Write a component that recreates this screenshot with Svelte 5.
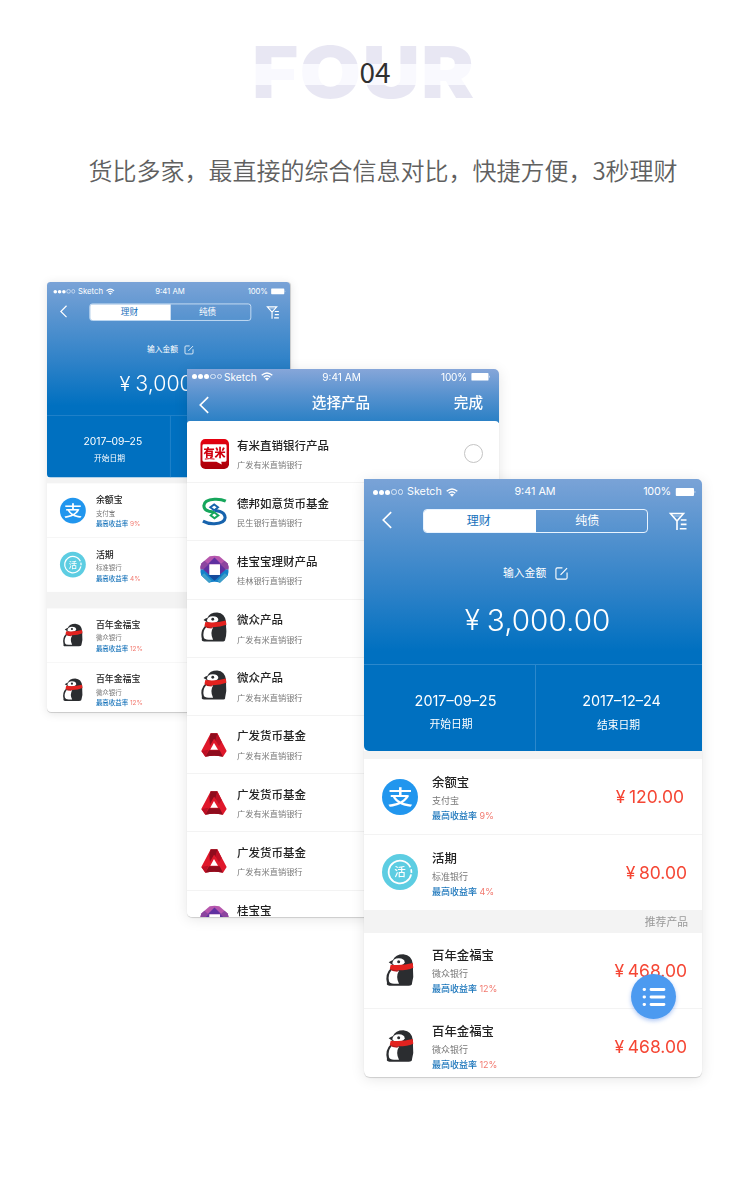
<script>
  const market = [
    { icon: 'youmi', name: '有米直销银行产品', bank: '广发有米直销银行', radio: true },
    { icon: 'debang', name: '德邦如意货币基金', bank: '民生银行直销银行' },
    { icon: 'guilin', name: '桂宝宝理财产品', bank: '桂林银行直销银行' },
    { icon: 'penguin', name: '微众产品', bank: '广发有米直销银行' },
    { icon: 'penguin', name: '微众产品', bank: '广发有米直销银行' },
    { icon: 'guangfa', name: '广发货币基金', bank: '广发有米直销银行' },
    { icon: 'guangfa', name: '广发货币基金', bank: '广发有米直销银行' },
    { icon: 'guangfa', name: '广发货币基金', bank: '广发有米直销银行' },
    { icon: 'guilin', name: '桂宝宝', bank: '' }
  ];
  const held = [
    { icon: 'zhi', name: '余额宝', bank: '支付宝', rate: '9%', money: '120.00', inset: true },
    { icon: 'huo', name: '活期', bank: '标准银行', rate: '4%', money: '80.00' }
  ];
  const advised = [
    { icon: 'penguin', name: '百年金福宝', bank: '微众银行', rate: '12%', money: '468.00' },
    { icon: 'penguin', name: '百年金福宝', bank: '微众银行', rate: '12%', money: '468.00' }
  ];
</script>

{#snippet logo(kind)}
  {#if kind === 'penguin'}
    <svg class="logo-penguin" viewBox="0 0 84 96">
      <path fill="#2b2d30" d="M8 25 Q15 20 21 18 Q28 1 52 1 Q78 3 81 32 V48 Q84 70 78 88 Q79 95 68 95 H10 Q0 94 3 87 Q-4 60 15 42 L20 33 Z" />
      <path fill="#fff" d="M19 28 Q21 13 38 13 Q56 14 56 25 Q53 35 34 35 Q22 35 19 28 Z" />
      <circle cx="38" cy="23" r="4.500" fill="#2b2d30" />
      <path fill="#fff" d="M17 48 Q4 64 9 82 Q11 89 24 89 L39 89 Q28 68 39 50 Z" />
      <path fill="#e3221f" d="M14 32 Q48 36 80 27 L82 41 Q64 49 38 49 L14 47 Q10 45 12 41 Z" />
      <path fill="#b91518" d="M14 47 L38 49 L34 53 L20 51 Z" />
    </svg>
  {:else if kind === 'zhi'}
    <svg class="logo-round" viewBox="0 0 36 36">
      <circle cx="18" cy="18" r="18" fill="#2196ee" />
      <text transform="translate(18.300 25.800) scale(1.120 .92)" font-size="22.500" font-weight="500" text-anchor="middle" fill="#fff">支</text>
    </svg>
  {:else if kind === 'huo'}
    <svg class="logo-round" viewBox="0 0 36 36">
      <circle cx="18" cy="18" r="18" fill="#5dcde2" />
      <circle cx="18" cy="18" r="11.400" fill="none" stroke="#fff" stroke-width="1.700" stroke-dasharray="64 2 3.600 2" transform="rotate(12 18 18)" />
      <text x="18" y="22.200" font-size="11.500" font-weight="500" text-anchor="middle" fill="#fff">活</text>
    </svg>
  {:else if kind === 'youmi'}
    <svg class="logo-wide" viewBox="0 0 30 30">
      <defs>
        <linearGradient id="ym" x1="0" y1="0" x2="0" y2="1">
          <stop offset="0" stop-color="#e6000f" />
          <stop offset="1" stop-color="#a9000a" />
        </linearGradient>
      </defs>
      <rect x=".5" y="0" width="29.500" height="31" rx="5" fill="url(#ym)" />
      <path fill="#fff" d="M4 5.500 H26 Q27.500 5.500 27.500 7 V22 Q27.500 23.500 26 23.500 H22 L22.500 26.500 L17 23.500 H4 Q2.500 23.500 2.500 22 V7 Q2.500 5.500 4 5.500 Z" />
      <text x="15" y="18.400" font-size="11.500" font-weight="900" text-anchor="middle" fill="#d1000e">有米</text>
      <path d="M5 20.800 Q10 19.800 15 20.800" stroke="#d1000e" stroke-width="1" fill="none" />
    </svg>
  {:else if kind === 'debang'}
    <svg class="logo-wide" viewBox="0 0 90 90" fill="none" stroke-width="9.500">
      <path stroke="#1763ad" d="M9 75 Q25 84 45 83 Q77 81 78 64 Q77 50 62 45 L45 41" />
      <path stroke="#16a65c" d="M80 13 Q66 6 45 7 Q13 8 12 27 Q12 40 28 44 L45 47" />
      <path stroke="#1763ad" stroke-width="6" d="M45 42 L32 32 L44 23 L56 32 L45 41" />
      <path stroke="#16a65c" stroke-width="6" d="M44 47 L57 57 L45 66 L33 57 L44 47" />
    </svg>
  {:else if kind === 'guilin'}
    <svg class="logo-wide" viewBox="0 0 90 90">
      <path fill="#b657ad" d="M30 4 Q45 1 60 4 L86 26 Q90 36 88 45 H2 Q0 36 4 26 Z" />
      <path fill="#8c459f" d="M4 26 L14 18 L28 30 V45 H2 Q0 36 4 26 Z M86 26 L76 18 L62 30 V45 H88 Q90 36 86 26 Z" />
      <path fill="#1381ca" d="M2 45 H88 Q90 54 86 64 L62 86 Q45 80 28 86 L4 64 Q0 54 2 45 Z" />
      <path fill="#3f9fc8" d="M4 64 L13 57 L36 80 L28 86 Z M86 64 L77 57 L54 80 L62 86 Z" />
      <path fill="#6030a0" d="M45 8 L66 29 H24 Z M10 45 L29 27 V62 Z M80 45 L61 27 V62 Z" />
      <path fill="#144b9d" d="M24 61 H66 L45 80 Z" />
      <rect x="29" y="29" width="33" height="33" fill="#fff" />
    </svg>
  {:else}
    <svg class="logo-wide tri" viewBox="0 0 78 72">
      <path fill="#e0182b" d="M29 1 H49 L77 54 L66 71 Q39 66 13 71 L1 54 Z" />
      <path fill="#8f0c1d" d="M29 1 H49 L45 24 L39 17 L27 38 L25 18 Z" />
      <path fill="#bd1025" d="M1 54 L22 50 L13 71 Z M49 1 L62 27 L54 40 L43 22 Z" />
      <path fill="#8f0c1d" d="M13 71 L24 52 H56 L66 71 Q39 66 13 71 Z" />
      <path fill="#fff" d="M39 30 L51 50 H28 Z" />
    </svg>
  {/if}
{/snippet}

{#snippet status()}
  <div class="status">
    <span class="carrier">
      <i></i><i></i><i></i><i class="off"></i><i class="off"></i>
      <b>Sketch</b>
      <svg class="wifi" viewBox="0 0 12 9" fill="none" stroke="#fff" stroke-width="1.400">
        <path d="M.7 3.300 Q6 -1.500 11.300 3.300 M2.700 5.300 Q6 2.300 9.300 5.300" />
        <path fill="#fff" stroke="none" d="M6 8.800 L3.900 6.600 Q6 5 8.100 6.600 Z" />
      </svg>
    </span>
    <span class="clock">9:41 AM</span>
    <span class="power">100%
      <svg viewBox="0 0 23 9"><rect width="20.500" height="9" rx="1" fill="#fff" /><path d="M21.300 2.800 Q23 4.500 21.300 6.200 Z" fill="#fff" /></svg>
    </span>
  </div>
{/snippet}

{#snippet back()}
  <svg class="back" viewBox="0 0 12 20" fill="none" stroke="#fff" stroke-width="2"><path d="M11 .5 L1.500 10 L11 19.500" /></svg>
{/snippet}

{#snippet row(item, full)}
  <li class="row">
    <div class="mark">{@render logo(item.icon)}</div>
    <div class="info">
      <h3>{item.name}</h3>
      <p>{item.bank}</p>
      <p class="rate">最高收益率 <em>{item.rate}</em></p>
    </div>
    {#if full}
      <div class="money" class:inset={item.inset}><span>¥</span>{item.money}</div>
    {/if}
  </li>
{/snippet}

{#snippet wealth(full)}
  <header class="top">
    {@render status()}
    <nav>
      {@render back()}
      <div class="seg"><span class="on">理财</span><span>纯债</span></div>
      <svg class="filter" viewBox="0 0 18 18" fill="none" stroke="#fff" stroke-width="1.600">
        <path d="M1.500 1.500 H14.500 L8 9 Z M8 8.500 V18 M11.800 8 H17.500 M11.800 12.400 H17.500 M10.800 16.800 H17.500" />
        <path d="M4.500 4 H11.500" stroke-width=".8" opacity=".6" />
      </svg>
    </nav>
    <div class="label">输入金额
      <svg viewBox="0 0 14 14" fill="none" stroke="#fff" stroke-width="1.200"><path d="M8 1 H2.500 Q1 1 1 2.500 V11.500 Q1 13 2.500 13 H11.500 Q13 13 13 11.500 V6 M6 8.500 L13 1.200" /></svg>
    </div>
    <div class="sum"><span>¥</span>3,000.00</div>
    <div class="dates">
      <div><strong>2017–09–25</strong><small>开始日期</small></div>
      <div>
        {#if full}<strong>2017–12–24</strong><small>结束日期</small>{/if}
      </div>
    </div>
  </header>
  <ul class="list first">
    {#each held as item}{@render row(item, full)}{/each}
  </ul>
  <div class="divider">{full ? '推荐产品' : ''}</div>
  <ul class="list second">
    {#each advised as item}{@render row(item, full)}{/each}
  </ul>
{/snippet}

<main>
  <div class="hero">
    <div class="word">FOUR</div>
    <div class="num">04</div>
  </div>
  <h1>货比多家，最直接的综合信息对比，快捷方便，3秒理财</h1>

  <div class="stage">
    <section class="phone small">{@render wealth(false)}</section>

    <section class="phone picker">
      <header>
        {@render status()}
        <nav>{@render back()}<h2>选择产品</h2><span>完成</span></nav>
      </header>
      <ul>
        {#each market as item}
          <li>
            <div class="mark">{@render logo(item.icon)}</div>
            <div class="info"><h3>{item.name}</h3><p>{item.bank}</p></div>
            {#if item.radio}<i class="radio"></i>{/if}
          </li>
        {/each}
      </ul>
    </section>

    <section class="phone large">
      {@render wealth(true)}
      <div class="fab">
        <svg viewBox="0 0 24 20" stroke="#fff" stroke-width="2.800" stroke-linecap="round">
          <path d="M2 2.500 H2.600 M9 2.500 H22 M2 10 H2.600 M9 10 H22 M2 17.500 H2.600 M9 17.500 H22" />
        </svg>
      </div>
    </section>
  </div>
</main>

<style>
  :global(body) { margin: 0; background: #fff; }
  main {
    width: 750px;
    height: 1193px;
    overflow: hidden;
    position: relative;
    font-family: Inter, "Noto Sans CJK SC", sans-serif;
    color: #222;
  }
  h1, h2, h3, p, ul { margin: 0; padding: 0; font-weight: 400; list-style: none; }
  svg { display: block; flex: none; overflow: visible; }
  em, i { font-style: normal; }

  .hero { display: grid; height: 146px; justify-items: center; }
  .hero > * { grid-area: 1 / 1; }
  .word {
    margin-top: 36px;
    margin-right: 23px;
    height: 72px;
    font: 900 71px/72px Inter, sans-serif;
    letter-spacing: 1px;
    transform: scaleX(1.120);
    color: transparent;
    background: linear-gradient(#e8e7f3 28px, #f9f9fe 28px 49px, #e8e7f3 49px);
    -webkit-background-clip: text;
    background-clip: text;
  }
  .num { margin-top: 56px; z-index: 1; font: 400 28px/30px "Noto Sans CJK SC", sans-serif; color: #303030; }
  h1 {
    height: 50px;
    text-align: center;
    padding-left: 16px;
    font: 350 24px/47px "Noto Sans CJK SC", sans-serif;
    color: #606060;
    white-space: nowrap;
  }

  .stage { position: absolute; inset: 0; }
  .phone {
    position: absolute;
    background: #fff;
    box-shadow: 0 1px 1px rgba(0, 0, 0, .16), 0 2px 14px rgba(0, 0, 0, .1);
    display: flex;
    flex-direction: column;
  }
  .small, .large { width: 338px; height: 598px; border-radius: 0 5px 6px 6px; }
  .small { left: 47px; top: 282px; transform: scale(.719); transform-origin: 0 0; border-radius: 5px 5px 6px 6px; }
  .large { left: 364px; top: 479px; }

  .status {
    display: grid;
    grid-template-columns: 1fr auto 1fr;
    align-items: center;
    height: 26px;
    padding: 0 5px 0 9px;
    font-size: 10.800px;
    line-height: 14px;
    color: #fff;
  }
  .carrier { display: flex; align-items: center; }
  .carrier i { width: 5px; height: 5px; border-radius: 50%; background: #fff; margin-right: 1px; }
  .carrier i.off { background: none; border: 1px solid #dbe8f7; width: 3.500px; height: 3.500px; margin-right: 1px; }
  .carrier b { font-weight: 400; margin: 0 4px 0 3px; }
  .wifi { width: 12px; height: 9px; }
  .power { display: flex; justify-content: flex-end; align-items: center; gap: 4px; letter-spacing: -.2px; }
  .power svg { width: 22px; height: 8px; }

  .top {
    height: 272px;
    flex: none;
    color: #fff;
    border-radius: inherit;
    border-bottom-left-radius: 5px;
    border-bottom-right-radius: 0;
    background: linear-gradient(#7aa3d7 0, #5b95d0 45px, #2f82c8 110px, #0070c0 172px);
  }
  .top nav { display: flex; align-items: center; padding-left: 18px; margin-top: 4px; height: 24px; }
  .back { width: 10px; height: 18px; }
  .top .back { transform: translateY(-1px); }
  .seg {
    display: flex;
    box-sizing: border-box;
    width: 225px;
    height: 24px;
    margin-left: 31px;
    border: 1px solid #e9f4ff;
    border-radius: 4px;
    overflow: hidden;
    font-size: 12px;
    line-height: 22px;
    text-align: center;
  }
  .seg span { box-sizing: border-box; width: 50%; padding-right: 8px; }
  .seg .on { background: #fff; color: #1671bb; padding: 0 2px 0 0; }
  .filter { width: 18px; height: 18px; margin-left: 21px; }
  .label { display: flex; align-items: center; gap: 9px; margin: 32px 0 0 139px; height: 18px; font-size: 10.800px; line-height: 18px; }
  .label svg { width: 13px; height: 13px; margin-top: -2px; }
  .sum { display: flex; justify-content: center; height: 40px; margin-top: 17px; font-size: 29.700px; line-height: 40px; font-weight: 300; padding-left: 9px; }
  .sum span { margin-right: 7px; font-size: 28px; }
  .dates { display: flex; margin-top: 24px; height: 86px; border-top: 1px solid #2c88cc; }
  .dates div { box-sizing: border-box; width: 166px; text-align: center; padding-top: 27px; }
  .dates div:first-child { width: 172px; border-right: 1px solid #2c88cc; padding-left: 12px; }
  .dates div:last-child { padding-left: 5px; }
  .dates strong { display: block; font-size: 14.400px; font-weight: 400; line-height: 18px; }
  .dates small { display: block; font-size: 10.800px; line-height: 16px; margin-top: 7px; }
  .dates div:first-child small { padding-right: 9px; }
  .dates div:last-child small { padding-right: 6px; padding-top: 1px; }

  .list.first { border-top: 8px solid #f3f3f3; }
  .row { display: flex; box-sizing: border-box; height: 75.500px; border-bottom: 1px solid #f3f3f3; }
  .row:last-child { border-color: transparent; }
  .mark { display: flex; justify-content: center; align-items: center; width: 72px; height: 75px; }
  .logo-round { width: 36px; height: 36px; }
  .logo-penguin { width: 28px; height: 32px; }
  .row .logo-penguin { margin-top: -1px; }
  .row .info { margin-left: -4px; padding-top: 15px; }
  .second .row .info { padding-top: 14px; }
  .row h3 { font-size: 12.400px; line-height: 18px; font-weight: 500; }
  .row p { font-size: 9px; line-height: 15px; margin-top: 1px; color: #777; }
  .row .rate { margin-top: 0; color: #1a75bb; font-weight: 500; }
  .rate em { color: #f27a70; font-weight: 400; }
  .money { margin-left: auto; padding-right: 15px; font-size: 17.500px; line-height: 75px; color: #f54634; display: flex; }
  .money.inset { padding-right: 18px; }
  .money span { margin-right: 3.500px; }
  .divider { height: 23px; flex: none; background: #f3f3f3; text-align: right; padding-right: 14px; font-size: 10.800px; line-height: 25px; color: #999; }

  .picker { left: 187px; top: 369px; width: 312px; height: 548px; overflow: hidden; border-radius: 0 5px 5px 5px; }
  .picker > header { height: 54px; flex: none; color: #fff; background: linear-gradient(#86a6d9, #5792cf 26px, #2a80c5 53px); }
  .picker .status { height: 15px; padding: 0 8px 0 5px; font-size: 10.100px; }
  .picker .carrier b { margin-left: 1px; }
  .picker .power svg { width: 20px; height: 7.500px; }
  .picker nav { display: grid; grid-template-columns: 1fr auto 1fr; align-items: center; height: 37px; padding: 0 16px 0 12px; font-size: 14.600px; line-height: 22px; }
  .picker nav h2 { font-size: 14.600px; font-weight: 500; }
  .picker nav span { text-align: right; font-weight: 500; }
  .picker nav .back { margin-top: 5px; height: 18px; }
  .picker ul { background: #fff; margin-top: -2px; border-radius: 3px 4px 0 0; padding-top: 4px; }
  .picker li { display: flex; align-items: center; box-sizing: border-box; height: 58.200px; border-bottom: 1px solid #f3f3f3; }
  .picker .mark { width: 55px; height: 58px; flex: none; }
  .picker .logo-penguin { width: 26px; height: 30px; margin-right: 2px; margin-top: -2px; }
  .picker .info { margin-left: -5px; align-self: flex-start; padding-top: 12.500px; }
  .picker h3 { font-size: 11.500px; line-height: 17px; font-weight: 500; }
  .picker p { font-size: 8.200px; line-height: 14px; margin-top: 3.500px; color: #777; }
  .logo-wide { width: 29px; height: 29px; }
  .logo-wide.tri { width: 26px; height: 24px; margin-right: 2px; }
  .radio { box-sizing: border-box; width: 19px; height: 19px; border: 1px solid #c4c4c4; border-radius: 50%; margin-left: auto; margin-right: 16px; }

  .fab {
    position: absolute;
    right: 26px;
    top: 495px;
    width: 45px;
    height: 45px;
    border-radius: 50%;
    display: grid;
    place-items: center;
    background: #4c9af0;
    box-shadow: 0 2px 4px rgba(60, 120, 230, .4);
  }
  .fab svg { width: 24px; height: 20px; }
</style>
